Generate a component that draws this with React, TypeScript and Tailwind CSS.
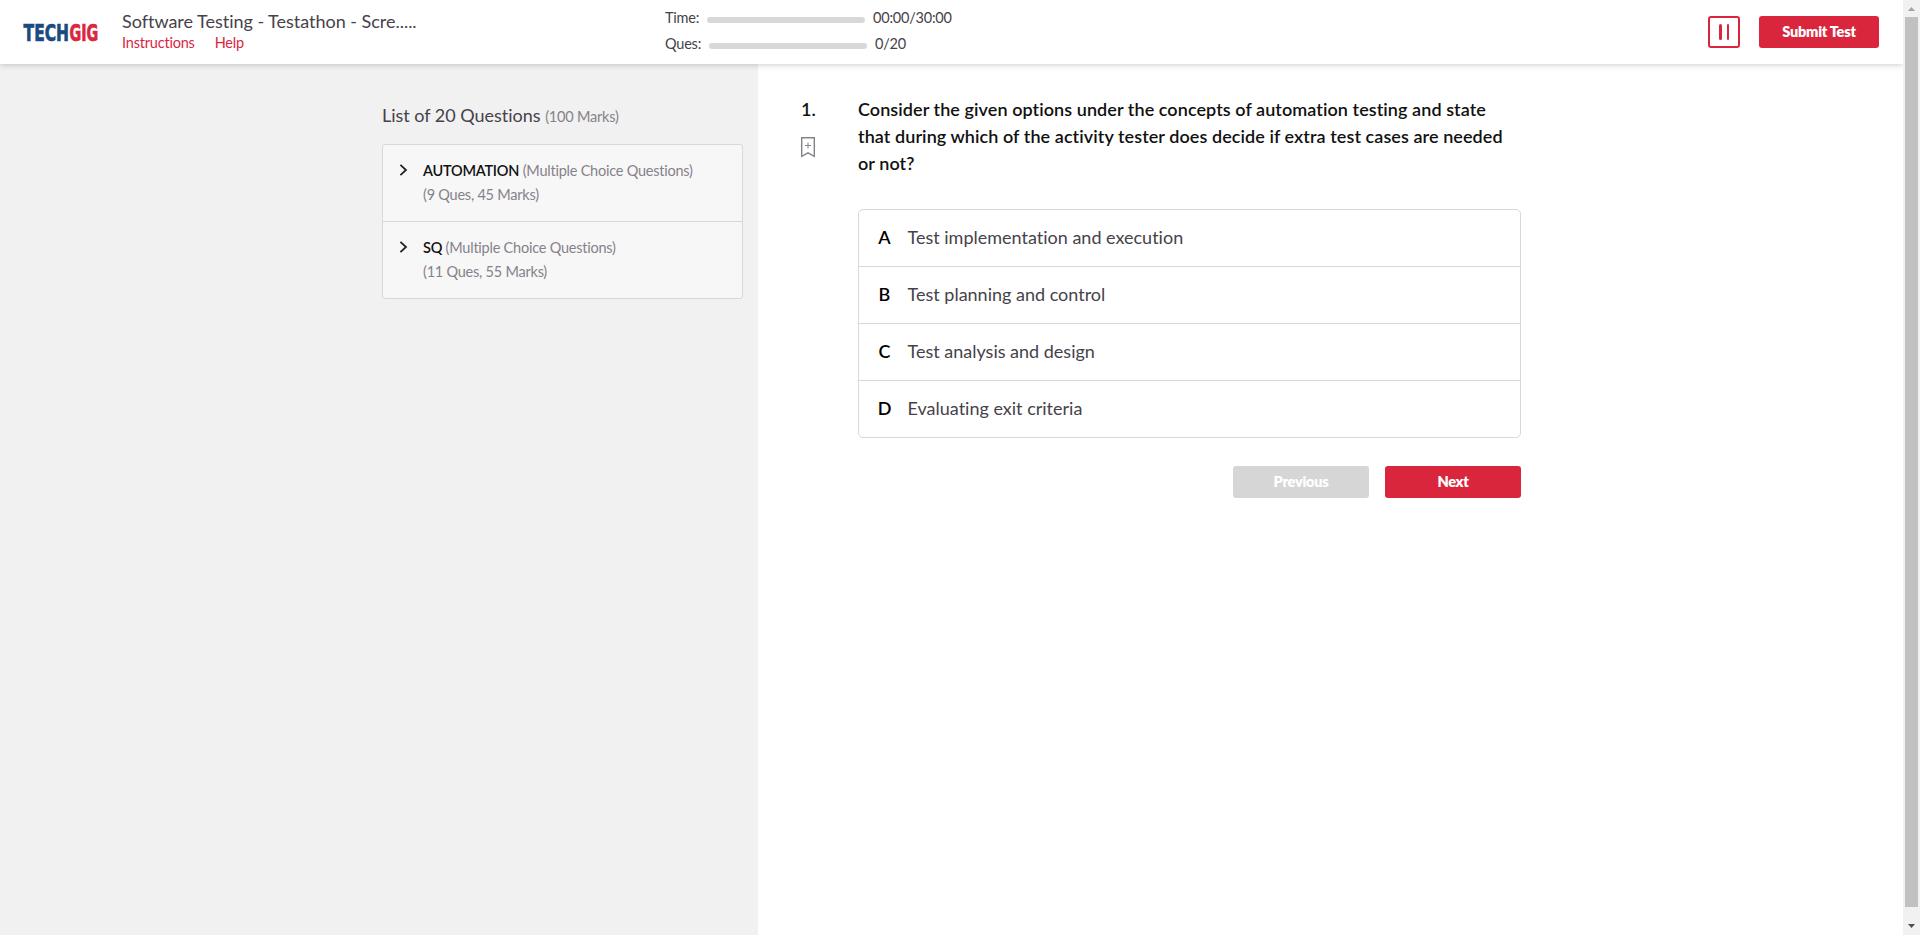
import React from "react";

const sections = [
  { name: "AUTOMATION", kind: "(Multiple Choice Questions)", info: "(9 Ques, 45 Marks)" },
  { name: "SQ", kind: "(Multiple Choice Questions)", info: "(11 Ques, 55 Marks)" },
];

const options = [
  { key: "A", label: "Test implementation and execution" },
  { key: "B", label: "Test planning and control" },
  { key: "C", label: "Test analysis and design" },
  { key: "D", label: "Evaluating exit criteria" },
];

function Logo() {
  return (
    <svg width="84" height="40" viewBox="0 0 84 40" className="block" fontFamily="'DejaVu Sans Condensed', 'DejaVu Sans', sans-serif" fontWeight="700" fontSize="23.5" strokeWidth="0.7">
      <text x="3.6" y="27.4" textLength="45.4" lengthAdjust="spacingAndGlyphs" fill="#1b4a80" stroke="#1b4a80">TECH</text>
      <text x="49.4" y="27.4" textLength="28.8" lengthAdjust="spacingAndGlyphs" fill="#da263e" stroke="#da263e">GIG</text>
    </svg>
  );
}

function Header() {
  return (
    <header className="relative z-10 flex h-16 shrink-0 bg-white shadow-[0_1px_6px_rgba(0,0,0,0.2)]">
      <div className="w-[122px] shrink-0 pt-[14px] pl-5">
        <Logo />
      </div>
      <div className="w-[543px] shrink-0 pt-[10px]">
        <h1 className="text-[18px] leading-[22px] tracking-[-0.02px] text-[#46424a]">Software Testing - Testathon - Scre.....</h1>
        <nav className="mt-px flex gap-5 text-[14.5px] leading-5 tracking-[-0.2px] text-[#da263e]">
          <a>Instructions</a>
          <a>Help</a>
        </nav>
      </div>
      <div className="flex flex-1 flex-col gap-1.5 pt-2 text-[14.5px] leading-5 tracking-[-0.22px] text-[#46424a]">
        <div className="flex">
          <span className="w-[42px]">Time:</span>
          <span className="mt-[9px] mr-2 h-1.5 w-[158px] rounded-full bg-[#d8d8d8]" />
          <span>00:00/30:00</span>
        </div>
        <div className="flex">
          <span className="w-11">Ques:</span>
          <span className="mt-[9px] mr-2 h-1.5 w-[158px] rounded-full bg-[#d8d8d8]" />
          <span>0/20</span>
        </div>
      </div>
      <div className="flex gap-[19px] pt-4 pr-6">
        <button className="flex size-8 items-center justify-center gap-[5px] rounded-[3px] border-2 border-[#d9263d]">
          <span className="h-4 w-[2.5px] rounded-full bg-[#d9263d]" />
          <span className="h-4 w-[2.5px] rounded-full bg-[#d9263d]" />
        </button>
        <button className="h-8 w-[120px] rounded-[3px] bg-[#d9263d] pb-px text-[14.5px] leading-[31px] font-extrabold tracking-[-0.25px] text-white">Submit Test</button>
      </div>
    </header>
  );
}

function Sidebar() {
  return (
    <aside className="w-[758px] shrink-0 bg-[#f1f1f1] pt-[39px] pl-[382px]">
      <h2 className="h-6 text-[18px] leading-6 tracking-[-0.02px] text-[#46424a]">
        List of 20 Questions <span className="text-[14.5px] tracking-[-0.2px] text-[#86828a]">(100 Marks)</span>
      </h2>
      <div className="mt-[17px] w-[361px] divide-y divide-[#d8d8d8] rounded-[3px] border border-[#d8d8d8] bg-[#f7f7f7]">
        {sections.map((s) => (
          <div key={s.name} className="flex h-[77px] pt-[14px] pl-4 last:h-[76px]">
            <svg width="9" height="12" viewBox="0 0 9 12" className="mt-[5px] mr-[15px] block" fill="none" stroke="#222" strokeWidth="1.8">
              <path d="M1.4 0.8 7 6 1.4 11.2" />
            </svg>
            <div className="text-[14.5px] leading-6 tracking-[-0.23px] text-[#86828a]">
              <p><span className="font-semibold text-[#111]">{s.name}</span> {s.kind}</p>
              <p>{s.info}</p>
            </div>
          </div>
        ))}
      </div>
    </aside>
  );
}

function Question() {
  return (
    <main className="flex flex-1 pt-8 pl-[43px]">
      <div className="w-[57px] text-[18px] leading-[27px] font-semibold text-[#111]">
        <p>1.</p>
        <svg width="14" height="21" viewBox="0 0 14 21" className="mt-[14px] block" fill="none" stroke="#86828a" strokeWidth="1.4">
          <path d="M0.7 0.7h12.6v18.6L7 15.8 0.7 19.3Z" />
          <path d="M7 5.5v6M4 8.5h6" strokeWidth="1" />
        </svg>
      </div>
      <div className="w-[663px]">
        <p className="text-[18px] leading-[27px] font-semibold tracking-[0.07px] text-[#111]">
          Consider the given options under the concepts of automation testing and state
          <br />
          that during which of the activity tester does decide if extra test cases are needed
          <br />
          or not?
        </p>
        <ul className="mt-8 divide-y divide-[#d8d8d8] rounded-[5px] border border-[#d8d8d8]">
          {options.map((o) => (
            <li key={o.key} className="flex h-[57px] items-center pb-px pl-[18px] text-[18px] text-[#46424a] last:h-[56px]">
              <span className="mr-[15.5px] w-[15px] text-center font-semibold text-black">{o.key}</span>
              {o.label}
            </li>
          ))}
        </ul>
        <div className="mt-7 flex justify-end gap-4 text-[14.5px] font-extrabold tracking-[-0.25px] text-white">
          <button className="h-8 w-[136px] rounded-[3px] bg-[#d6d6d6] pb-px leading-[31px]">Previous</button>
          <button className="h-8 w-[136px] rounded-[3px] bg-[#d9263d] pb-px leading-[31px]">Next</button>
        </div>
      </div>
    </main>
  );
}

function Scrollbar() {
  return (
    <div className="flex w-[17px] shrink-0 flex-col items-center bg-[#f1f1f1]">
      <svg width="17" height="17" viewBox="0 0 17 17" className="block shrink-0"><path d="M5 11 8.5 7 12 11Z" fill="#a3a3a3" /></svg>
      <div className="w-[13px] flex-1 bg-[#c1c1c1]" />
      <svg width="17" height="28" viewBox="0 0 17 28" className="block shrink-0"><path d="M5 17 12 17 8.5 21Z" fill="#505050" /></svg>
    </div>
  );
}

export default function App() {
  return (
    <div className="flex h-[935px] w-[1920px] overflow-hidden bg-white font-['Lato',sans-serif] [font-variant-ligatures:none]">
      <div className="flex flex-1 flex-col overflow-hidden">
        <Header />
        <div className="flex flex-1">
          <Sidebar />
          <Question />
        </div>
      </div>
      <Scrollbar />
    </div>
  );
}
